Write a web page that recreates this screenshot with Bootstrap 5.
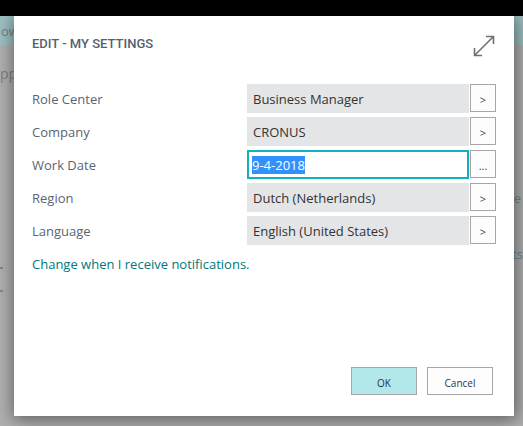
<!DOCTYPE html>
<html lang="en">
<head>
<meta charset="utf-8">
<meta name="viewport" content="width=device-width, initial-scale=1">
<title>Edit - My Settings</title>
<link href="https://cdn.jsdelivr.net/npm/bootstrap@5.3.0/dist/css/bootstrap.min.css" rel="stylesheet">
<style>
body { font-family: "Open Sans", "Noto Sans", sans-serif; font-size: 13px; line-height: 20px; background: #b0b0b0; overflow: hidden; }
.top-strip { height: 16px; background: #000; }
.stage { padding: 0 9px 10px 14px; }
.backdrop-page { position: absolute; inset: 0; color: #7b7f83; z-index: 0; }
.backdrop-band { height: 29px; background: #9cc0c1; }
.peek { position: absolute; font-size: 13px; white-space: nowrap; }
.peek-band { left: 1px; top: 5px; }
.peek-app { left: 0; top: 48px; font-size: 14px; }
.peek-e { right: 2px; top: 172px; color: #668f92; }
.peek-ts { right: 0; top: 228px; color: #6f8688; }
.peek-dash { left: 0; width: 3px; height: 2px; background: #868686; }
.peek-dash-a { top: 251px; }
.peek-dash-b { top: 274px; }
.settings { z-index: 1; background: #fff; padding: 18px 18px 21px; box-shadow: 1px 2px 16px 2px rgba(0, 0, 0, .46); }
.settings-title { font-family: Roboto, sans-serif; font-size: 13px; line-height: 20px; font-weight: 500; color: #566071; }
.settings-head { height: 50px; }
.expand-btn { width: 22px; height: 22px; margin: 1px 1px 0 0; }
.rows { gap: 4px; }
.setting { display: grid; grid-template-columns: 215fr 222fr 27px; height: 29px; }
.setting label { color: #5b6473; }
.field { border: 0; border-radius: 0; background: #e4e5e7; color: #333; height: 29px; padding: 6px; line-height: 17px; min-width: 0; width: 100%; outline: 0; }
.field-date { border: 2px solid #12b1bd; background: #fff; padding: 4px 3px; }
.field-date::selection { background: #3390ff; color: #fff; }
.lookup { height: 28px; margin-left: 1px; border: 1px solid #a6a6a6; background: #fdfdfd; color: #444; font-size: 11px; line-height: 26px; padding: 2px 0 0; }
.notify-row { padding-top: 9px; }
.notify { color: #00777c; }
.footer-actions { gap: 10px; padding-right: 3px; }
.action { width: 66px; height: 28px; border: 1px solid #a6a6a6; border-radius: 0; background: #fdfdfd; color: #1c3557; font-size: 10px; line-height: 22px; padding: 4px 0 0; }
.action-ok { background: #b2e8ea; }
</style>
<script src="https://cdn.jsdelivr.net/npm/bootstrap@5.3.0/dist/js/bootstrap.bundle.min.js"></script>
</head>
<body class="d-flex flex-column min-vh-100">
<div class="top-strip flex-shrink-0"></div>
<div class="stage position-relative flex-grow-1 d-flex overflow-hidden">
  <div class="backdrop-page" aria-hidden="true">
    <div class="backdrop-band"></div>
    <span class="peek peek-band">ow</span>
    <span class="peek peek-app">pp</span>
    <span class="peek peek-e">e</span>
    <span class="peek peek-ts">ts</span>
    <span class="peek peek-dash peek-dash-a"></span>
    <span class="peek peek-dash peek-dash-b"></span>
  </div>
  <form class="settings position-relative flex-grow-1 d-flex flex-column" role="dialog" aria-labelledby="title">
    <div class="settings-head d-flex justify-content-between align-items-start">
      <h1 class="settings-title m-0" id="title">EDIT - MY SETTINGS</h1>
      <button type="button" class="expand-btn btn p-0 border-0 d-flex" aria-label="Expand">
        <svg width="22" height="22" viewBox="0 0 22 22" fill="none" stroke="#707070" stroke-width="1.6" aria-hidden="true"><path d="M1.5 20.5 20.5 1.5M13 1.5h7.5V9M1.5 13v7.5H9"/></svg>
      </button>
    </div>
    <div class="rows d-flex flex-column">
      <div class="setting"><label class="align-self-center" for="role">Role Center</label><input class="field" id="role" value="Business Manager" readonly><button type="button" class="lookup" aria-label="Choose role center">&gt;</button></div>
      <div class="setting"><label class="align-self-center" for="company">Company</label><input class="field" id="company" value="CRONUS" readonly><button type="button" class="lookup" aria-label="Choose company">&gt;</button></div>
      <div class="setting"><label class="align-self-center" for="date">Work Date</label><input class="field field-date" id="date" value="9-4-2018"><button type="button" class="lookup" aria-label="Choose work date">...</button></div>
      <div class="setting"><label class="align-self-center" for="region">Region</label><input class="field" id="region" value="Dutch (Netherlands)" readonly><button type="button" class="lookup" aria-label="Choose region">&gt;</button></div>
      <div class="setting"><label class="align-self-center" for="language">Language</label><input class="field" id="language" value="English (United States)" readonly><button type="button" class="lookup" aria-label="Choose language">&gt;</button></div>
    </div>
    <div class="notify-row"><a href="#" class="notify text-decoration-none">Change when I receive notifications.</a></div>
    <div class="footer-actions mt-auto d-flex justify-content-end">
      <button type="submit" class="action action-ok">OK</button>
      <button type="button" class="action">Cancel</button>
    </div>
  </form>
</div>
<script>
const dateField = document.getElementById('date');
dateField.focus();
dateField.select();
</script>
</body>
</html>
